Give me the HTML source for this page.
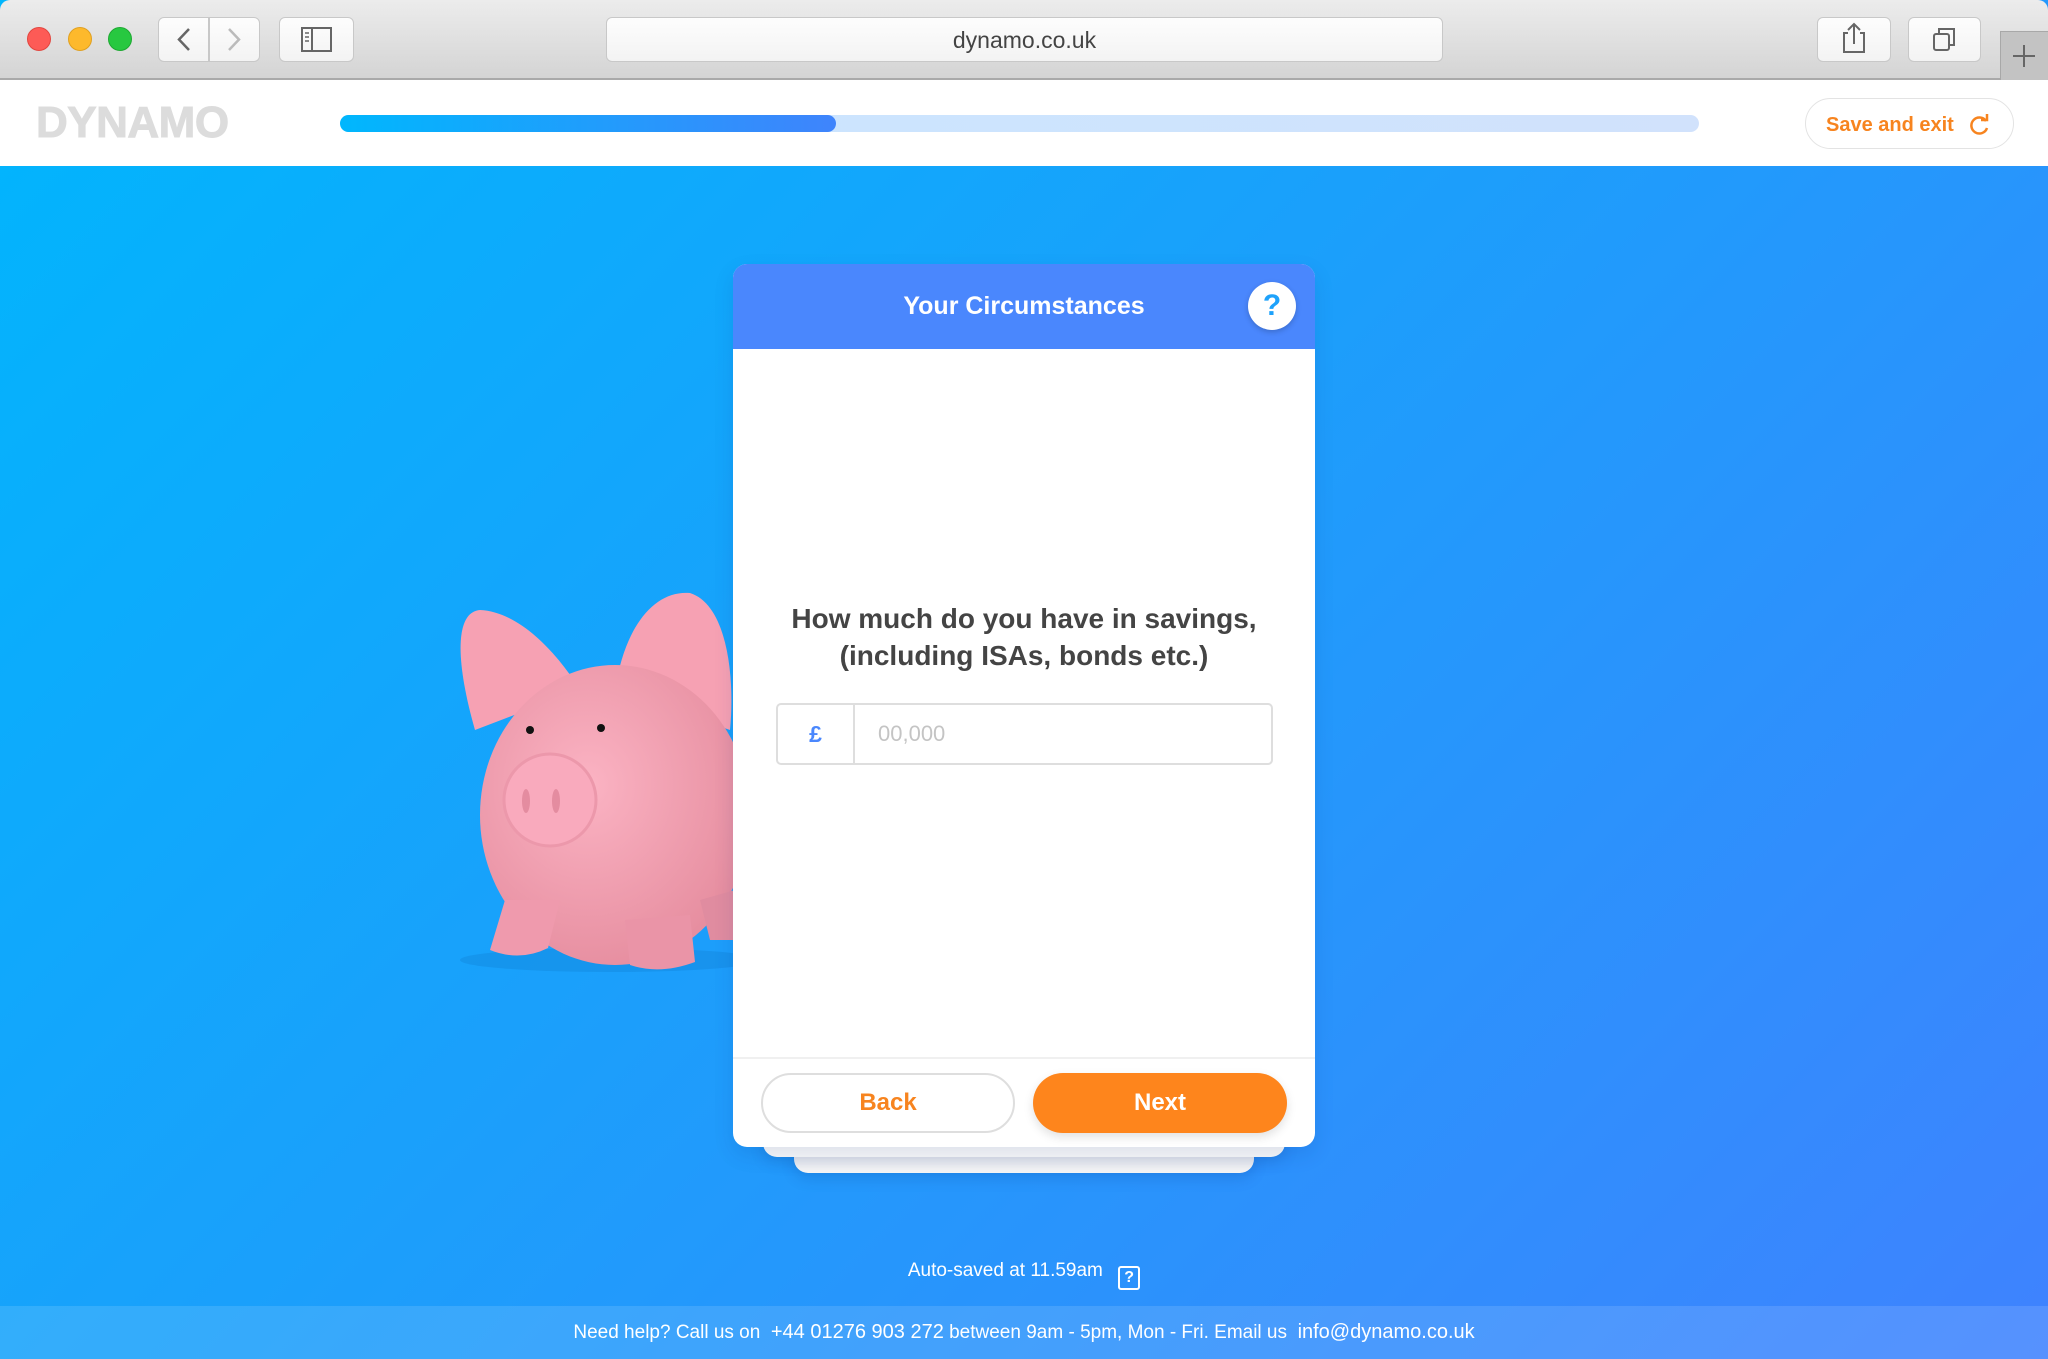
<!DOCTYPE html>
<html><head><meta charset="utf-8"><style>
*{margin:0;padding:0;box-sizing:border-box}
body{width:2048px;height:1359px;overflow:hidden;position:relative;font-family:"Liberation Sans",sans-serif;background:linear-gradient(135deg,#00b6fd 0%,#1aa0fb 45%,#3f82fe 100%)}
.abs{position:absolute}
.chrome{left:0;top:0;width:2048px;height:80px;background:linear-gradient(#ececec,#d4d4d4);border-bottom:2px solid #a9a9a9;border-radius:10px 10px 0 0}
.dot{width:24px;height:24px;border-radius:50%;top:27px}
.btn{background:linear-gradient(#fdfdfd,#f3f3f3);border:1px solid #c8c8c8;border-radius:6px;top:17px;height:45px}
.hdr{left:0;top:80px;width:2048px;height:86px;background:#fff}
.card{left:733px;top:264px;width:582px;height:883px;background:#fff;border-radius:14px;overflow:hidden;box-shadow:0 8px 20px rgba(0,40,120,.12)}
.stack{background:#f7f7f7;border-radius:0 0 14px 14px;box-shadow:0 6px 14px rgba(0,40,120,.15)}
</style></head><body>
<div class="abs chrome"></div>
<div class="abs dot" style="left:27px;background:#fd5b56;border:1px solid #e2463f"></div>
<div class="abs dot" style="left:68px;background:#fdb92c;border:1px solid #e0a020"></div>
<div class="abs dot" style="left:108px;background:#27c840;border:1px solid #1ea932"></div>
<div class="abs btn" style="left:158px;width:51px;border-radius:6px 0 0 6px"></div>
<div class="abs btn" style="left:209px;width:51px;border-radius:0 6px 6px 0"></div>
<svg class="abs" style="left:158px;top:17px" width="102" height="45"><path d="M31 12 L21 22.5 L31 33" stroke="#666" stroke-width="2.5" fill="none"/><path d="M71 12 L81 22.5 L71 33" stroke="#bbb" stroke-width="2.5" fill="none"/></svg>
<div class="abs btn" style="left:279px;width:75px"></div>
<svg class="abs" style="left:279px;top:17px" width="75" height="45"><rect x="23" y="11" width="29" height="23" fill="none" stroke="#666" stroke-width="2"/><line x1="33" y1="11" x2="33" y2="34" stroke="#666" stroke-width="2"/><path d="M26 16h4M26 20h4M26 24h4" stroke="#666" stroke-width="1.5"/></svg>
<div class="abs btn" style="left:606px;width:837px;text-align:center;line-height:45px;font-size:23px;color:#444">dynamo.co.uk</div>
<div class="abs btn" style="left:1817px;width:74px"></div>
<svg class="abs" style="left:1817px;top:17px" width="74" height="45"><path d="M31 16h-4v19h20v-19h-4" fill="none" stroke="#666" stroke-width="2"/><path d="M37 27V7M31 13l6-6 6 6" fill="none" stroke="#666" stroke-width="2"/></svg>
<div class="abs btn" style="left:1908px;width:73px"></div>
<svg class="abs" style="left:1908px;top:17px" width="73" height="45"><rect x="26" y="17" width="15" height="16" rx="2" fill="none" stroke="#666" stroke-width="2"/><path d="M31 17v-5h15v16h-5" fill="none" stroke="#666" stroke-width="2"/></svg>
<div class="abs" style="left:2000px;top:31px;width:48px;height:49px;background:#c3c3c3;border-left:1px solid #a8a8a8;border-top:1px solid #a8a8a8"></div>
<svg class="abs" style="left:2000px;top:31px" width="48" height="47"><path d="M24 14v22M13 25h22" stroke="#666" stroke-width="2"/></svg>

<div class="abs hdr"></div>
<div class="abs" style="left:36px;top:98px;font-size:44px;font-weight:bold;color:#dcdcdc;letter-spacing:-0.5px;-webkit-text-stroke:1px #dcdcdc">DYNAMO</div>
<div class="abs" style="left:340px;top:115px;width:1359px;height:17px;border-radius:9px;background:linear-gradient(90deg,#c9e6ff,#d1e2fc)"></div>
<div class="abs" style="left:340px;top:115px;width:496px;height:17px;border-radius:9px;background:linear-gradient(90deg,#00b7fd,#3f84fc)"></div>
<div class="abs" style="left:1805px;top:98px;width:209px;height:51px;border:1px solid #e3e3e3;border-radius:26px;color:#f7841f;font-size:20px;font-weight:bold;line-height:53px;padding-left:20px">Save and exit</div>
<svg class="abs" style="left:1968px;top:113px" width="24" height="24"><path d="M18 8A8 8 0 1 0 19 15" fill="none" stroke="#f7841f" stroke-width="2.5"/><path d="M13 7h6V1" fill="none" stroke="#f7841f" stroke-width="2.5"/></svg>

<svg class="abs" style="left:0;top:0" width="2048" height="1359">
<defs><radialGradient id="pg" cx="40%" cy="40%" r="70%"><stop offset="0" stop-color="#fbb3c3"/><stop offset="1" stop-color="#e48a9c"/></radialGradient></defs>
<ellipse cx="610" cy="960" rx="150" ry="12" fill="#0b74c5" opacity=".25"/>
<path d="M475 730 C455 660 455 612 480 610 C525 612 565 665 580 690 Z" fill="#f6a1b3"/>
<path d="M615 690 C625 625 655 590 690 593 C728 605 735 680 730 730 Z" fill="#f6a1b3"/>
<ellipse cx="615" cy="815" rx="135" ry="150" fill="url(#pg)"/>
<path d="M505 900 L490 950 Q520 962 548 948 L560 900 Z" fill="#ef9aad"/>
<path d="M625 920 L630 965 Q660 975 695 962 L690 915 Z" fill="#ea94a7"/>
<path d="M700 900 L710 940 L735 940 L735 890 Z" fill="#e08ca0"/>
<circle cx="550" cy="800" r="46" fill="#f9aabd" stroke="#ec98ab" stroke-width="3"/>
<ellipse cx="526" cy="801" rx="4" ry="12" fill="#e48ca0"/><ellipse cx="556" cy="801" rx="4" ry="12" fill="#e48ca0"/>
<circle cx="530" cy="730" r="4" fill="#111"/><circle cx="601" cy="728" r="4" fill="#111"/>
</svg>

<div class="abs stack" style="left:794px;top:1140px;width:460px;height:33px"></div>
<div class="abs stack" style="left:763px;top:1130px;width:522px;height:27px;background:#fafafa"></div>
<div class="abs card">
<div style="height:85px;background:#4a87fd;color:#fff;font-size:25px;font-weight:bold;text-align:center;line-height:85px">Your Circumstances</div>
<div class="abs" style="left:515px;top:18px;width:48px;height:48px;border-radius:50%;background:#fff;color:#1ea2fb;font-size:30px;font-weight:bold;text-align:center;line-height:48px;box-shadow:0 2px 6px rgba(0,0,0,.2)">?</div>
<div class="abs" style="left:0;top:336px;width:582px;text-align:center;font-size:28px;font-weight:bold;color:#444;line-height:37px">How much do you have in savings,<br>(including ISAs, bonds etc.)</div>
<div class="abs" style="left:43px;top:439px;width:497px;height:62px;border:2px solid #dedede;border-radius:5px">
<div class="abs" style="left:0;top:0;width:77px;height:58px;border-right:2px solid #dedede;color:#4a87fd;font-size:23px;font-weight:bold;text-align:center;line-height:58px">£</div>
<div class="abs" style="left:100px;top:0;line-height:58px;font-size:22px;color:#c4c4c4">00,000</div>
</div>
<div class="abs" style="left:0;top:793px;width:582px;height:2px;background:#f0f0f0"></div>
<div class="abs" style="left:28px;top:809px;width:254px;height:60px;border:2px solid #dedede;border-radius:30px;text-align:center;line-height:56px;color:#f7841f;font-size:24px;font-weight:bold">Back</div>
<div class="abs" style="left:300px;top:809px;width:254px;height:60px;background:#fe851c;border-radius:30px;text-align:center;line-height:60px;color:#fff;font-size:24px;font-weight:bold;box-shadow:0 4px 10px rgba(0,0,0,.12)">Next</div>
</div>

<div class="abs" style="left:0;top:1260px;width:2048px;text-align:center;color:#fff;font-size:19px">Auto-saved at 11.59am <span style="display:inline-block;width:22px;height:24px;border:2px solid #fff;border-radius:3px;font-size:16px;font-weight:bold;line-height:20px;vertical-align:-6px;margin-left:10px">?</span></div>
<div class="abs" style="left:0;top:1306px;width:2048px;height:53px;background:rgba(255,255,255,.12);text-align:center;color:#fff;font-size:19px;line-height:53px">Need help? Call us on &nbsp;<span style="font-size:20px">+44 01276 903 272</span> between 9am - 5pm, Mon - Fri. Email us &nbsp;<span style="font-size:20px">info@dynamo.co.uk</span></div>
</body></html>
